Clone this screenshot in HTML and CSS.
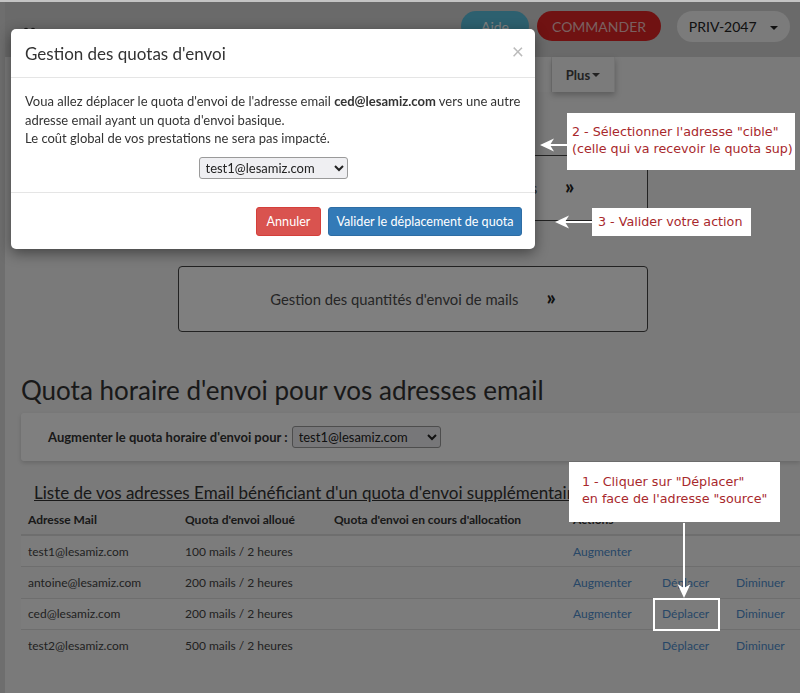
FILE: index.html
```html
<!DOCTYPE html>
<html lang="fr">
<head>
<meta charset="utf-8">
<title>Gestion des quotas d'envoi</title>
<link rel="stylesheet" href="styles.css">
</head>
<body>
<div class="page">
  <header class="topbar">
    <div class="logo">
      <svg width="16" height="16" viewBox="0 0 16 16"><circle cx="4" cy="4" r="2.2" fill="#333"/><circle cx="11" cy="4" r="2.2" fill="#333"/><rect x="1" y="8" width="14" height="6" rx="2" fill="#333"/></svg>
    </div>
    <div class="top-actions">
      <button class="pill pill-help">Aide</button>
      <button class="pill pill-order">COMMANDER</button>
      <button class="pill pill-account">PRIV-2047 <span class="caret"></span></button>
    </div>
  </header>

  <nav class="tabs">
    <span class="tab">Accueil</span>
    <span class="tab">Emails</span>
    <span class="tab">Domaines</span>
    <span class="tab">Quotas</span>
    <span class="tab tab-more">Plus <span class="caret small"></span></span>
  </nav>

  <main class="content">
    <div class="cards">
      <a class="card"><span>Gestion des quotas horaires de vos adresses</span><span class="raquo">&raquo;</span></a>
      <a class="card"><span>Gestion des quantités d'envoi de mails</span><span class="raquo">&raquo;</span></a>
    </div>

    <h1 class="title">Quota horaire d'envoi pour vos adresses email</h1>

    <div class="panel">
      <label class="panel-label">Augmenter le quota horaire d'envoi pour :</label>
      <select class="sel"><option>test1@lesamiz.com</option></select>
    </div>

    <h2 class="list-title">Liste de vos adresses Email bénéficiant d'un quota d'envoi supplémentaire</h2>

    <table class="grid">
      <colgroup>
        <col class="c1"><col class="c2"><col class="c3"><col class="c4"><col class="c5"><col class="c6">
      </colgroup>
      <thead>
        <tr><th>Adresse Mail</th><th>Quota d'envoi alloué</th><th>Quota d'envoi en cours d'allocation</th><th colspan="3">Actions</th></tr>
      </thead>
      <tbody>
        <tr><td>test1@lesamiz.com</td><td>100 mails / 2 heures</td><td></td><td><a>Augmenter</a></td><td></td><td></td></tr>
        <tr><td>antoine@lesamiz.com</td><td>200 mails / 2 heures</td><td></td><td><a>Augmenter</a></td><td><a>Déplacer</a></td><td><a>Diminuer</a></td></tr>
        <tr><td>ced@lesamiz.com</td><td>200 mails / 2 heures</td><td></td><td><a>Augmenter</a></td><td><a>Déplacer</a></td><td><a>Diminuer</a></td></tr>
        <tr><td>test2@lesamiz.com</td><td>500 mails / 2 heures</td><td></td><td></td><td><a>Déplacer</a></td><td><a>Diminuer</a></td></tr>
      </tbody>
    </table>
  </main>
</div>

<div class="backdrop"></div>

<div class="modal">
  <div class="modal-header">
    <h3 class="modal-title">Gestion des quotas d'envoi</h3>
    <span class="close">&times;</span>
  </div>
  <div class="modal-body">
    <p>Voua allez déplacer le quota d'envoi de l'adresse email <b>ced@lesamiz.com</b> vers une autre adresse email ayant un quota d'envoi basique.<br>Le coût global de vos prestations ne sera pas impacté.</p>
    <div class="modal-select"><select class="sel"><option>test1@lesamiz.com</option></select></div>
  </div>
  <div class="modal-footer">
    <button class="btn btn-danger">Annuler</button>
    <button class="btn btn-primary">Valider le déplacement de quota</button>
  </div>
</div>

<div class="note note-2">2 - Sélectionner l'adresse "cible"<br>(celle qui va recevoir le quota sup)</div>
<div class="note note-3">3 - Valider votre action</div>
<div class="note note-1">1 - Cliquer sur "Déplacer"<br>en face de l'adresse "source"</div>

<svg class="arrow arrow-2" width="30" height="16" viewBox="0 0 30 16"><path d="M28 8 H6" stroke="#fff" stroke-width="2"/><path d="M1 8 L15 1.5 L11 8 L15 14.5 Z" fill="#fff"/></svg>
<svg class="arrow arrow-3" width="40" height="16" viewBox="0 0 40 16"><path d="M38 8 H6" stroke="#fff" stroke-width="2"/><path d="M1 8 L15 1.5 L11 8 L15 14.5 Z" fill="#fff"/></svg>
<svg class="arrow arrow-1" width="16" height="76" viewBox="0 0 16 76"><path d="M8 0 V68" stroke="#fff" stroke-width="2"/><path d="M8 75 L1.5 61 L8 65 L14.5 61 Z" fill="#fff"/></svg>
<div class="highlight"></div>
</body>
</html>
```

FILE: styles.css
```css
* { box-sizing: border-box; }
html, body { margin: 0; padding: 0; }
body {
  font-family: Lato, "Open Sans", "Liberation Sans", sans-serif;
  color: #333;
  background: #f4f4f4;
  border-top: 2px solid #c4c4c4;
  height: 693px;
  overflow: hidden;
}
.page {
  border-left: 5px solid #dcdcdc;
  min-height: 691px;
}
.topbar {
  height: 55px;
  background: #d4d4d4;
  display: flex;
  align-items: flex-start;
  justify-content: space-between;
  padding: 9px 10px 0 17px;
}
.logo { padding-top: 15px; }
.top-actions { display: flex; align-items: flex-start; }
.pill {
  border: none;
  border-radius: 16px;
  height: 30px;
  font-family: Lato, "Open Sans", sans-serif;
  font-size: 14px;
  padding: 0;
}
.pill-help { width: 68px; background: #5bc0de; color: #ffffff; margin-right: 8px; }
.pill-order { width: 124px; background: #e02424; color: #f4c0c0; margin-right: 16px; }
.pill-account { width: 113px; height: 31px; background: #f6f6f6; color: #222; font-size: 14px; }
.caret {
  display: inline-block;
  width: 0; height: 0;
  border-left: 4px solid transparent;
  border-right: 4px solid transparent;
  border-top: 4px solid #222;
  margin-left: 10px;
  vertical-align: middle;
}
.caret.small { margin-left: 2px; border-top-color: #444; }

.tabs {
  height: 35px;
  display: flex;
  padding-left: 175px;
}
.tab {
  width: 93px;
  display: flex;
  align-items: center;
  justify-content: center;
  background: #f8f8f8;
  font-size: 13px;
  font-weight: bold;
  color: #444;
  border-right: 1px solid #e6e6e6;
}
.tab-more {
  width: 63px;
  box-shadow: 0 3px 6px rgba(0,0,0,0.25);
  background: #f6f6f6;
}

.content { padding: 0 0 0 16px; }
.cards {
  display: flex;
  flex-direction: column;
  gap: 45px;
  padding: 63px 0 0 157px;
}
.card {
  width: 470px;
  height: 66px;
  border: 1px solid #444;
  border-radius: 4px;
  background: #fff;
  display: flex;
  align-items: center;
  justify-content: center;
  gap: 28px;
  font-size: 14.8px;
  color: #4c4c4c;
}
.raquo { font-weight: 900; font-size: 20px; color: #222; margin-top: -4px; }

.title {
  margin: 42px 0 0 0;
  font-size: 26px;
  font-weight: normal;
  color: #333;
  line-height: 32px;
}
.panel {
  margin-top: 7px;
  height: 48px;
  background: #fff;
  box-shadow: 0 2px 4px rgba(0,0,0,0.15);
  display: flex;
  align-items: center;
  padding-left: 27px;
  gap: 4px;
  border-radius: 3px 0 0 3px;
}
.panel-label { font-size: 13px; font-weight: bold; color: #333; }
.sel {
  width: 149px;
  height: 22px;
  font-family: Lato, "Open Sans", sans-serif;
  font-size: 13px;
  color: #222;
  border: 1px solid #9a9a9a;
  border-radius: 3px;
  background: #efeff2;
  padding: 0 2px;
}
.list-title {
  margin: 21px 0 0 13px;
  font-size: 17px;
  font-weight: normal;
  text-decoration: underline;
  color: #333;
  line-height: 22px;
  white-space: nowrap;
}
.grid {
  margin-top: 3px;
  width: 779px;
  border-collapse: collapse;
  table-layout: fixed;
  font-size: 12px;
}
.c1 { width: 157px; } .c2 { width: 149px; } .c3 { width: 239px; }
.c4 { width: 89px; } .c5 { width: 74px; } .c6 { width: 71px; }
.grid th {
  text-align: left;
  font-weight: bold;
  padding: 5px 7px 7px;
  border-bottom: 2px solid #ddd;
  color: #333;
}
.grid td {
  padding: 0 7px;
  height: 31.5px;
  border-top: 1px solid #ddd;
  color: #444;
}
.grid tbody tr:nth-child(odd) { background: #f9f9f9; }
.grid a { color: #4f8fcf; }

.backdrop {
  position: fixed;
  left: 0; right: 0; top: 2px; bottom: 0;
  background: rgba(0,0,0,0.5);
  z-index: 10;
}
.modal {
  position: absolute;
  left: 11px; top: 29px;
  width: 524px;
  background: #fff;
  border-radius: 5px;
  box-shadow: 0 4px 14px rgba(0,0,0,0.45);
  z-index: 20;
}
.modal-header {
  height: 49px;
  border-bottom: 1px solid #e5e5e5;
  display: flex;
  align-items: center;
  justify-content: space-between;
  padding: 0 14px 0 14px;
}
.modal-title { margin: 0; font-size: 17px; font-weight: normal; color: #333; }
.close { font-size: 21px; color: #bbb; line-height: 1; margin-top: -6px; margin-right: -3px; }
.modal-body { padding: 14px 14px 13px; }
.modal-body p { margin: 0; font-size: 13px; line-height: 18.7px; color: #333; }
.modal-select { display: flex; justify-content: center; margin-top: 9px; }
.modal-footer {
  border-top: 1px solid #e5e5e5;
  padding: 14px 13px 13px;
  display: flex;
  justify-content: flex-end;
  gap: 7px;
}
.btn {
  height: 29px;
  border-radius: 3px;
  font-family: Lato, "Open Sans", sans-serif;
  font-size: 12.6px;
  color: #fff;
  padding: 0;
  white-space: nowrap;
  border: 1px solid transparent;
}
.btn-danger { background: #d9534f; border-color: #d43f3a; width: 65px; }
.btn-primary { background: #337ab7; border-color: #2e6da4; width: 194px; }

.note {
  position: absolute;
  background: #fff;
  z-index: 30;
  font-family: "DejaVu Sans", sans-serif;
  font-size: 12.7px;
  color: #a8282c;
  white-space: nowrap;
}
.note-2 { left: 567px; top: 113px; width: 228px; height: 57px; padding: 10px 0 0 5px; line-height: 17px; }
.note-3 { left: 592px; top: 208px; width: 159px; height: 28px; padding: 0 0 0 6px; line-height: 28px; }
.note-1 { left: 569px; top: 462px; width: 211px; height: 60px; padding: 12px 0 0 13px; line-height: 16.5px; }
.arrow { position: absolute; z-index: 30; }
.arrow-2 { left: 539px; top: 137px; }
.arrow-3 { left: 554px; top: 214px; }
.arrow-1 { left: 676px; top: 523px; }
.highlight {
  position: absolute;
  left: 653px; top: 598px;
  width: 67px; height: 33px;
  border: 2px solid #fff;
  z-index: 30;
}
```
